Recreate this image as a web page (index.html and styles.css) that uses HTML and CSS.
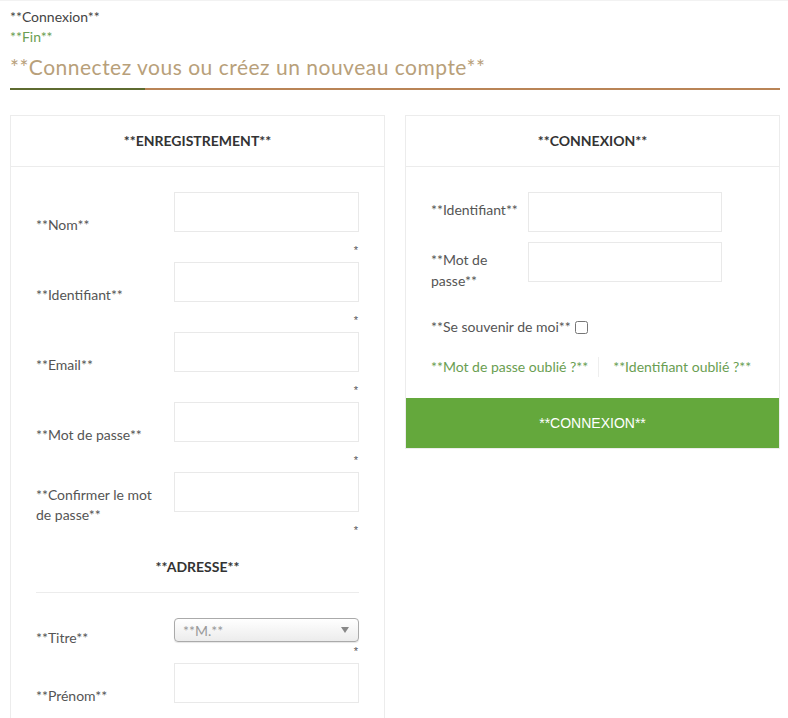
FILE: index.html
```html
<!DOCTYPE html>
<html lang="fr">
<head>
    <meta charset="UTF-8">
    <meta name="viewport" content="width=device-width, initial-scale=1.0">
    <title>Connexion</title>
    <link rel="stylesheet" href="styles.css">
</head>
<body>
    <div id="page">
        <div class="crumb">**Connexion**</div>
        <div class="crumb crumb-link">**Fin**</div>
        <h1 class="page-title">**Connectez vous ou créez un nouveau compte**</h1>

        <div class="columns">
            <!-- Registration -->
            <div class="panel">
                <div class="panel-head">**ENREGISTREMENT**</div>
                <div class="panel-body">
                    <div class="row">
                        <label class="row-label">**Nom**</label>
                        <div class="row-field">
                            <input type="text" class="text-input">
                            <div class="req">*</div>
                        </div>
                    </div>
                    <div class="row">
                        <label class="row-label">**Identifiant**</label>
                        <div class="row-field">
                            <input type="text" class="text-input">
                            <div class="req">*</div>
                        </div>
                    </div>
                    <div class="row">
                        <label class="row-label">**Email**</label>
                        <div class="row-field">
                            <input type="text" class="text-input">
                            <div class="req">*</div>
                        </div>
                    </div>
                    <div class="row">
                        <label class="row-label">**Mot de passe**</label>
                        <div class="row-field">
                            <input type="password" class="text-input">
                            <div class="req">*</div>
                        </div>
                    </div>
                    <div class="row">
                        <label class="row-label">**Confirmer le mot de passe**</label>
                        <div class="row-field">
                            <input type="password" class="text-input">
                            <div class="req">*</div>
                        </div>
                    </div>

                    <div class="sub-head">**ADRESSE**</div>

                    <div class="row">
                        <label class="row-label">**Titre**</label>
                        <div class="row-field">
                            <div class="select-wrap">
                                <select class="select-input">
                                    <option>**M.**</option>
                                    <option>**Mme**</option>
                                </select>
                            </div>
                            <div class="req req-select">*</div>
                        </div>
                    </div>
                    <div class="row">
                        <label class="row-label">**Prénom**</label>
                        <div class="row-field row-field-last">
                            <input type="text" class="text-input">
                        </div>
                    </div>
                </div>
            </div>

            <!-- Login -->
            <div class="panel panel-login">
                <div class="panel-head">**CONNEXION**</div>
                <div class="panel-body login-body">
                    <div class="login-row">
                        <label class="login-label">**Identifiant**</label>
                        <input type="text" class="text-input login-input">
                    </div>
                    <div class="login-row">
                        <label class="login-label">**Mot de passe**</label>
                        <input type="password" class="text-input login-input">
                    </div>
                    <div class="remember">
                        **Se souvenir de moi**
                        <input type="checkbox" class="remember-box">
                    </div>
                    <div class="forgot">
                        <a href="#">**Mot de passe oublié ?**</a>
                        <a href="#" class="forgot-second">**Identifiant oublié ?**</a>
                    </div>
                </div>
                <button class="login-btn">**CONNEXION**</button>
            </div>
        </div>
    </div>
</body>
</html>
```

FILE: styles.css
```css
body {
    margin: 0;
    padding: 0;
    background-color: white;
    font-family: Lato, "Open Sans", sans-serif;
    font-size: 14px;
    color: #555;
    overflow: hidden;
}
#page {
    border-top: 1px solid #f2f2f2;
    padding: 6px 8px 0 10px;
}
.crumb {
    line-height: 20px;
    color: #444;
}
.crumb-link {
    color: #6a9e52;
}
.page-title {
    margin: 5px 0 0 0;
    font-size: 21px;
    font-weight: normal;
    letter-spacing: 0.5px;
    line-height: 30px;
    color: #b8a07a;
    padding-bottom: 6px;
    border-bottom: 2px solid #b98456;
    position: relative;
}
.page-title::after {
    /* darker accent at the start of the rule */
    content: "";
    position: absolute;
    left: 0;
    bottom: -2px;
    width: 135px;
    height: 2px;
    background-color: #5e6b30;
}
.columns {
    display: grid;
    grid-template-columns: 1fr 1fr;
    column-gap: 20px;
    align-items: start;
    margin-top: 25px;
}
.panel {
    border: 1px solid #ececec;
}
.panel-head {
    height: 50px;
    line-height: 50px;
    text-align: center;
    font-weight: bold;
    font-size: 14px;
    color: #333;
    border-bottom: 1px solid #ececec;
}
.panel-body {
    padding: 25px 25px 30px 25px;
}
.row {
    display: flex;
    align-items: center;
    margin-bottom: 5px;
}
.row-label {
    width: 126px;
    padding-right: 12px;
    flex-shrink: 0;
    line-height: 20px;
}
.row-field {
    flex-grow: 1;
}
.row-field-last {
    padding-bottom: 25px;
}
.text-input {
    display: block;
    box-sizing: border-box;
    width: 100%;
    height: 40px;
    border: 1px solid #e9e9e9;
    background: white;
    margin: 0;
    padding: 0 8px;
    outline: none;
}
.req {
    text-align: right;
    font-family: "Liberation Sans", Arial, sans-serif;
    font-size: 11px;
    line-height: 14px;
    margin-top: 11px;
    padding-right: 1px;
    color: #555;
}
.req-select {
    margin-top: 2px;
}
.sub-head {
    text-align: center;
    font-weight: bold;
    color: #333;
    line-height: 20px;
    margin-top: 20px;
    padding-bottom: 15px;
    border-bottom: 1px solid #ececec;
    margin-bottom: 25px;
}
.select-wrap {
    position: relative;
}
.select-wrap::after {
    content: "";
    position: absolute;
    right: 10px;
    top: 9px;
    border-left: 4px solid transparent;
    border-right: 4px solid transparent;
    border-top: 6px solid #888;
}
.select-input {
    display: block;
    width: 100%;
    height: 24px;
    appearance: none;
    -webkit-appearance: none;
    border: 1px solid #aaa;
    border-radius: 4px;
    background: linear-gradient(#ffffff, #ececec);
    box-shadow: 0 1px 1px rgba(0,0,0,0.1);
    font-family: Lato, sans-serif;
    font-size: 14px;
    color: #999;
    padding: 0 8px;
}
.login-body {
    padding-bottom: 21px;
}
.login-row {
    display: flex;
    align-items: flex-start;
    margin-bottom: 10px;
}
.login-label {
    width: 97px;
    flex-shrink: 0;
    padding-top: 7px;
    line-height: 21px;
}
.login-input {
    width: 194px;
}
.remember {
    margin-top: 26px;
    line-height: 20px;
    display: flex;
    align-items: center;
}
.remember-box {
    margin: 0 0 0 4px;
    width: 13px;
    height: 13px;
}
.forgot {
    margin-top: 20px;
    line-height: 20px;
    display: flex;
}
.forgot a {
    color: #6a9e52;
    text-decoration: none;
    padding-right: 10px;
}
.forgot .forgot-second {
    border-left: 1px solid #eee;
    padding-left: 14px;
    padding-right: 0;
}
.login-btn {
    display: block;
    width: 100%;
    height: 50px;
    border: none;
    background-color: #64a83c;
    color: white;
    font-family: "Liberation Sans", Arial, sans-serif;
    font-size: 14px;
    cursor: pointer;
}
```
